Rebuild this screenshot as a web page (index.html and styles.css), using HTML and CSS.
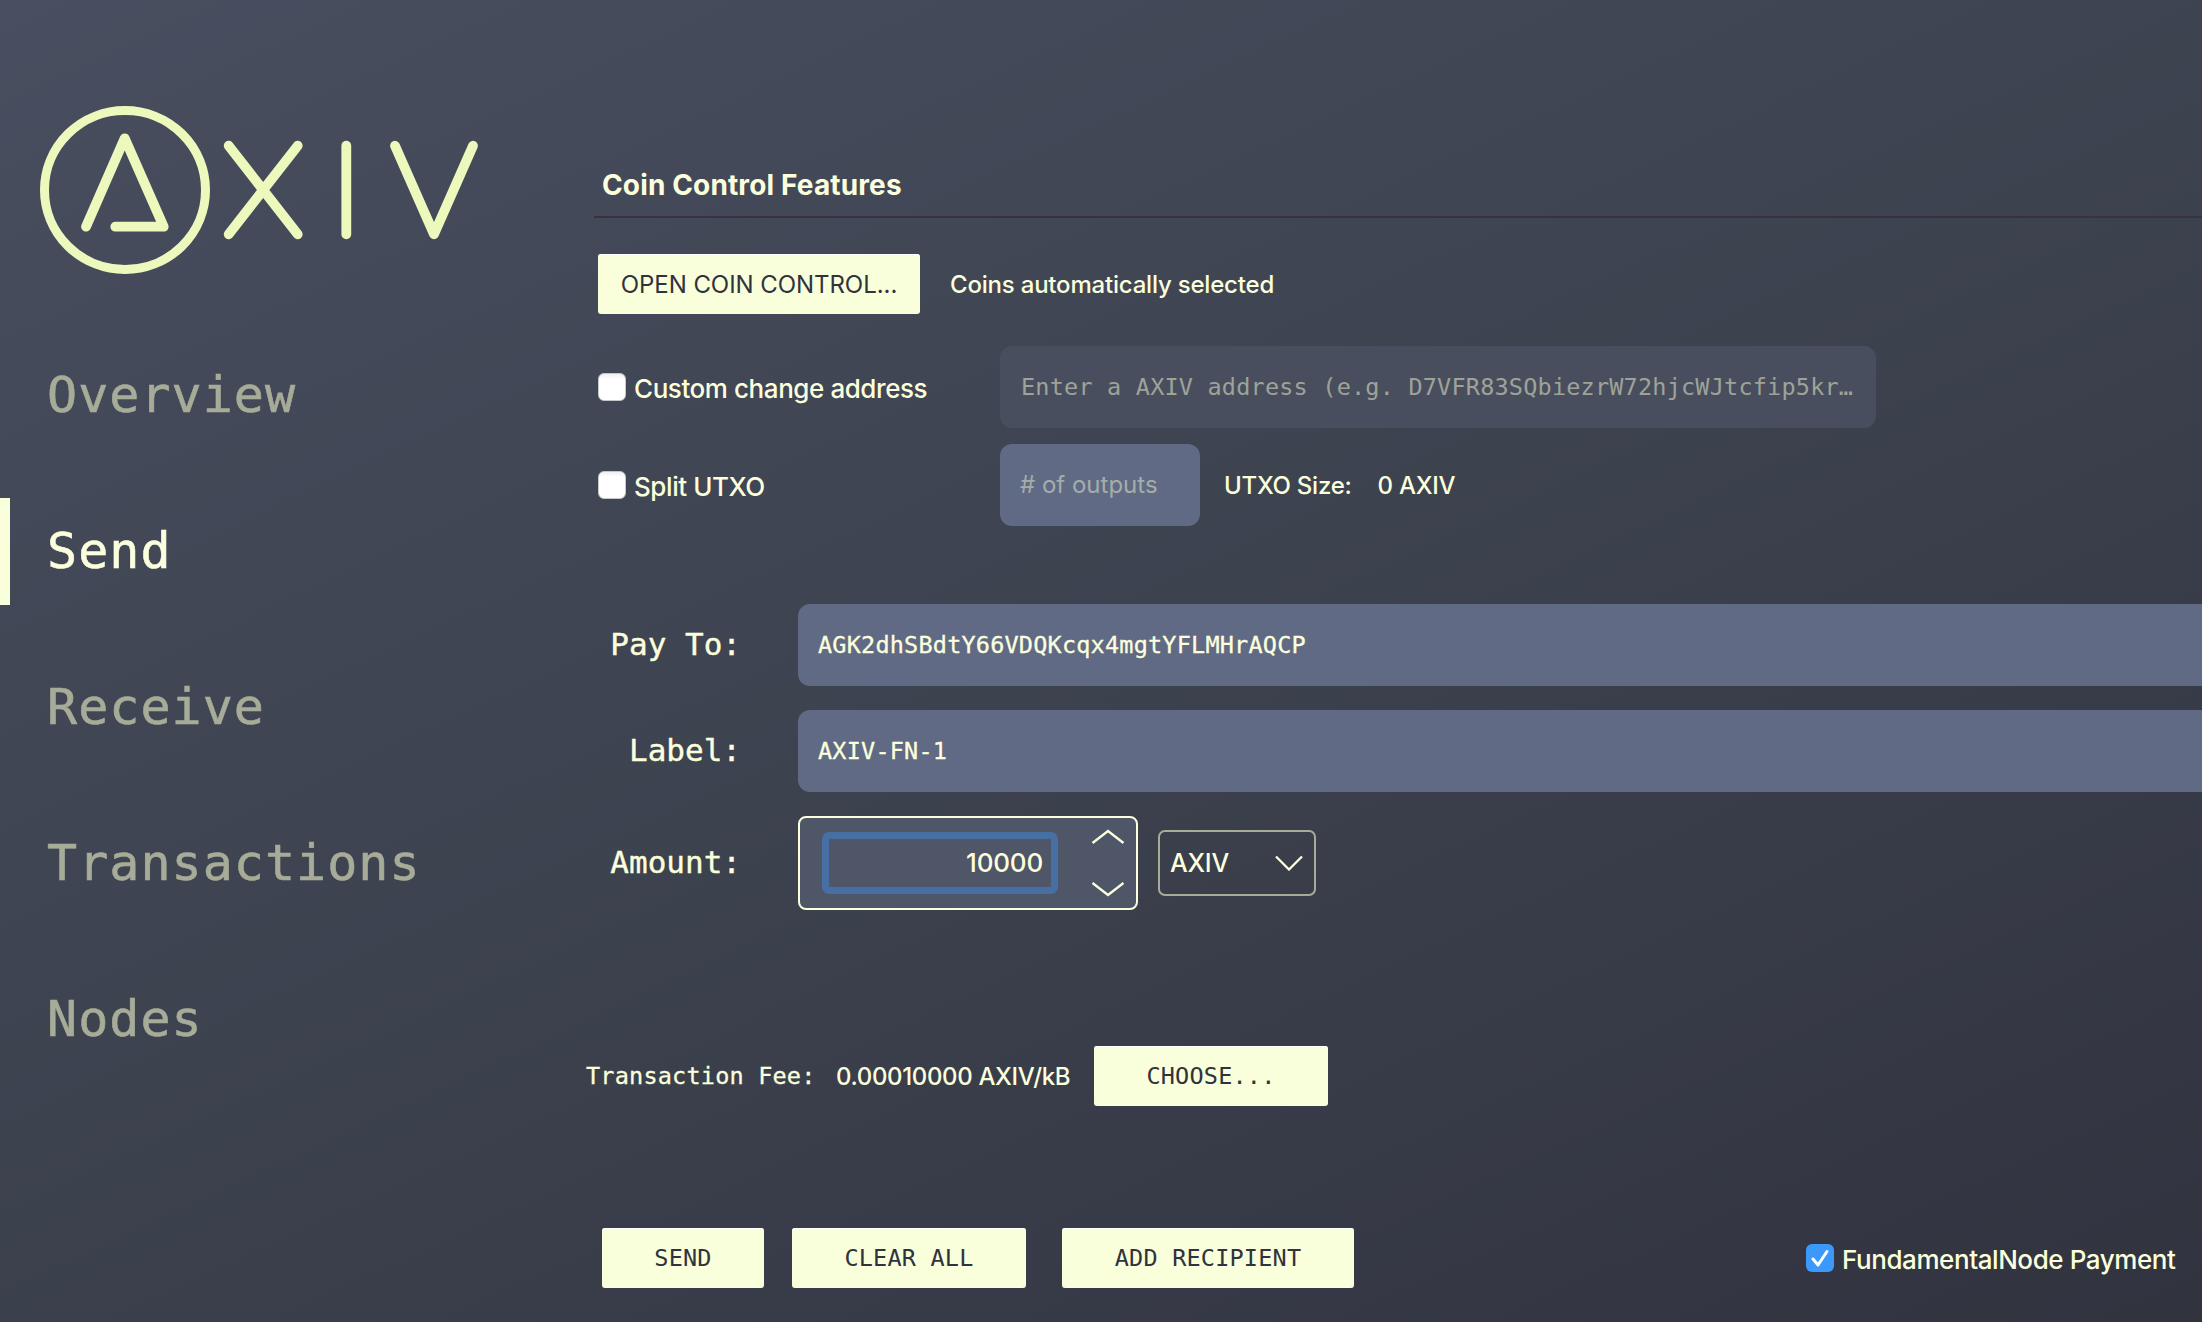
FILE: index.html
```html
<!DOCTYPE html>
<html lang="en">
<head>
<meta charset="utf-8">
<title>AXIV Wallet</title>
<link rel="stylesheet" href="styles.css">
</head>
<body>
<div class="window">
  <aside class="sidebar">
    <svg class="logo" width="450" height="180" viewBox="35 100 450 180" role="img" aria-label="AXIV">
      <ellipse cx="125" cy="190" rx="80.5" ry="79.5" stroke-width="9"/>
      <path d="M86 226.7 124.7 138.3 163.7 226.7H115.3"/>
      <path d="M228.7 145.7 297.7 234.3M297.7 145.7 228.7 234.3"/>
      <path d="M346.3 145.7V234.3"/>
      <path d="M395 145.7 434 234.3 473 145.7"/>
    </svg>
    <nav class="nav">
      <a class="nav-item">Overview</a>
      <a class="nav-item active">Send</a>
      <a class="nav-item">Receive</a>
      <a class="nav-item">Transactions</a>
      <a class="nav-item">Nodes</a>
    </nav>
  </aside>

  <main class="main">
    <h1 class="title">Coin Control Features</h1>

    <div class="row row-control">
      <button class="btn btn-open">OPEN COIN CONTROL...</button>
      <span class="text auto">Coins automatically selected</span>
    </div>

    <div class="row row-change">
      <label class="check"><span class="box"></span><span class="check-text">Custom change address</span></label>
      <div class="field field-disabled mono">Enter a AXIV address (e.g. D7VFR83SQbiezrW72hjcWJtcfip5kr…</div>
    </div>

    <div class="row row-split">
      <label class="check"><span class="box"></span><span class="check-text">Split UTXO</span></label>
      <div class="field field-outputs">&#35; of outputs</div>
      <span class="text utxo-label">UTXO Size:</span>
      <span class="text utxo-value">0 AXIV</span>
    </div>

    <div class="row row-pay">
      <span class="form-label">Pay To:</span>
      <div class="field field-wide mono">AGK2dhSBdtY66VDQKcqx4mgtYFLMHrAQCP</div>
    </div>
    <div class="row row-entry">
      <span class="form-label">Label:</span>
      <div class="field field-wide mono">AXIV-FN-1</div>
    </div>
    <div class="row row-entry">
      <span class="form-label">Amount:</span>
      <div class="spin">
        <div class="spin-input">10000</div>
        <div class="spin-arrows">
          <svg width="34" height="16" viewBox="0 0 34 16"><path d="M1.5 14 17 2 32.5 14"/></svg>
          <svg width="34" height="16" viewBox="0 0 34 16"><path d="M1.5 2 17 14 32.5 2"/></svg>
        </div>
      </div>
      <div class="combo">
        <span>AXIV</span>
        <svg width="28" height="16" viewBox="0 0 28 16"><path d="M1 1.5 14 14.5 27 1.5"/></svg>
      </div>
    </div>

    <div class="row row-fee">
      <span class="mono fee-label">Transaction Fee:</span>
      <span class="text fee-value">0.00010000 AXIV/kB</span>
      <button class="btn mono btn-medium">CHOOSE...</button>
    </div>

    <div class="row row-actions">
      <button class="btn mono btn-send">SEND</button>
      <button class="btn mono btn-medium btn-clear">CLEAR ALL</button>
      <button class="btn mono btn-add">ADD RECIPIENT</button>
      <label class="check check-payment">
        <span class="box box-on"><svg width="28" height="28" viewBox="0 0 28 28"><path d="M7 15 12 21 21 7.5"/></svg></span>
        <span class="check-text">FundamentalNode Payment</span>
      </label>
    </div>
  </main>
</div>
</body>
</html>
```
FILE: styles.css
```css
* { box-sizing: border-box; }

body {
  margin: 0;
  font-family: Inter, "Liberation Sans", sans-serif;
  color: #fbffdd;
}

.window {
  display: flex;
  width: 2202px;
  height: 1322px;
  overflow: hidden;
  background: linear-gradient(155deg, #494e60 0%, #3d424f 50%, #31333f 100%);
}

.sidebar {
  flex: none;
  width: 585px;
  padding-top: 100px;
}

.logo {
  display: block;
  margin-left: 35px;
  fill: none;
  stroke: #edf8bc;
  stroke-width: 9.8;
  stroke-linecap: round;
  stroke-linejoin: round;
}

.nav {
  display: flex;
  flex-direction: column;
  gap: 49px;
  margin-top: 62px;
}

.nav-item {
  height: 107px;
  padding-left: 47px;
  font: 50px/107px "DejaVu Sans Mono", monospace;
  letter-spacing: 1.03px;
  color: #a7ac98;
  -webkit-text-stroke: 0.6px;
}

.nav-item.active {
  color: #fbffdd;
  background: linear-gradient(#f9ffdb, #f9ffdb) no-repeat left / 10px 100%;
}

.main {
  flex: 1;
  min-width: 0;
}

.title {
  height: 218px;
  margin: 0 0 0 9px;
  padding: 155px 0 0 8px;
  border-bottom: 2px solid #393141;
  font-size: 28px;
  letter-spacing: 0.14px;
  line-height: 60px;
  font-weight: 700;
}

.row {
  display: flex;
  align-items: center;
  white-space: nowrap;
}

.mono {
  font-family: "DejaVu Sans Mono", monospace;
  font-size: 23.5px;
  letter-spacing: 0.2px;
}

.row > .mono:not(.btn):not(.field-disabled) { -webkit-text-stroke: 0.3px; }

.text {
  font-size: 24px;
  font-weight: 500;
  letter-spacing: -0.25px;
}

.btn {
  height: 60px;
  padding: 0;
  border: 0;
  border-radius: 3px;
  background: #f8ffda;
  box-shadow: inset 0 1px #fff;
  color: #30323e;
}

.row-control { margin: 36px 0 0 13px; }
.btn-open { width: 322px; font: 24px Inter, sans-serif; letter-spacing: -0.06px; }
.auto { margin-left: 30px; letter-spacing: -0.2px; }

.row-change { height: 82px; margin: 32px 0 0 13px; }
.row-split { height: 82px; margin: 16px 0 0 13px; }

.check {
  display: flex;
  align-items: center;
  gap: 8px;
  width: 402px;
  font-size: 26px;
  font-weight: 500;
  letter-spacing: -0.43px;
}

.check-text { padding-top: 2px; }

.box {
  flex: none;
  width: 28px;
  height: 28px;
  border: 1px solid #c5c6c8;
  border-radius: 6px;
  background: linear-gradient(#f1f1f1, #fff 5px);
}

.box-on {
  border: 0;
  background: #3b99fc;
}

.box-on svg {
  display: block;
  fill: none;
  stroke: #fff;
  stroke-width: 3;
  stroke-linecap: round;
  stroke-linejoin: round;
}

.field {
  height: 82px;
  padding-left: 20px;
  border-radius: 12px;
  background: #616a85;
  line-height: 82px;
}

.field-disabled {
  width: 876px;
  padding-left: 21px;
  background: #494e5e;
  color: #9da398;
}

.field-outputs { width: 200px; font-size: 24px; color: #a5ada8; }
.utxo-label { margin-left: 24px; }
.utxo-value { margin-left: 26px; }

.row-pay { margin-top: 78px; }
.row-entry { margin-top: 24px; }

.form-label {
  width: 156px;
  margin-right: 57px;
  padding-bottom: 2px;
  text-align: right;
  font: 31px "DejaVu Sans Mono", monospace;
  -webkit-text-stroke: 0.4px;
}

.field-wide { flex: 1; border-radius: 12px 0 0 12px; }

.spin {
  display: flex;
  width: 340px;
  height: 94px;
  padding: 14px 11px 14px 22px;
  border: 2px solid #fbffdd;
  border-radius: 8px;
  background: #4e5668;
}

.spin-input {
  width: 236px;
  height: 62px;
  padding-right: 8px;
  border: 7px solid #4670a3;
  border-radius: 7px;
  text-align: right;
  font-size: 26px;
  font-weight: 500;
  line-height: 48px;
  letter-spacing: -0.2px;
}

.spin-arrows {
  display: flex;
  flex-direction: column;
  justify-content: space-between;
  margin: -3px 0 -3px 33px;
}

.spin-arrows svg, .combo svg {
  fill: none;
  stroke: #fbffdd;
  stroke-width: 2.3;
}

.combo {
  display: flex;
  align-items: center;
  justify-content: space-between;
  width: 158px;
  height: 66px;
  margin-left: 20px;
  padding: 0 11px 0 10px;
  border: 2px solid #a7ac98;
  border-radius: 7px;
  font-size: 25px;
  font-weight: 500;
  letter-spacing: -0.2px;
}

.row-fee { margin-top: 136px; }
.fee-label { width: 251px; padding-left: 1px; }
.fee-value { width: 258px; letter-spacing: -0.35px; }
.btn-medium { width: 234px; }

.row-actions { margin: 122px 0 0 17px; }
.btn-send { width: 162px; }
.btn-clear { margin-left: 28px; }
.btn-add { width: 292px; margin-left: 36px; }
.check-payment { width: auto; margin-left: 452px; }
```
